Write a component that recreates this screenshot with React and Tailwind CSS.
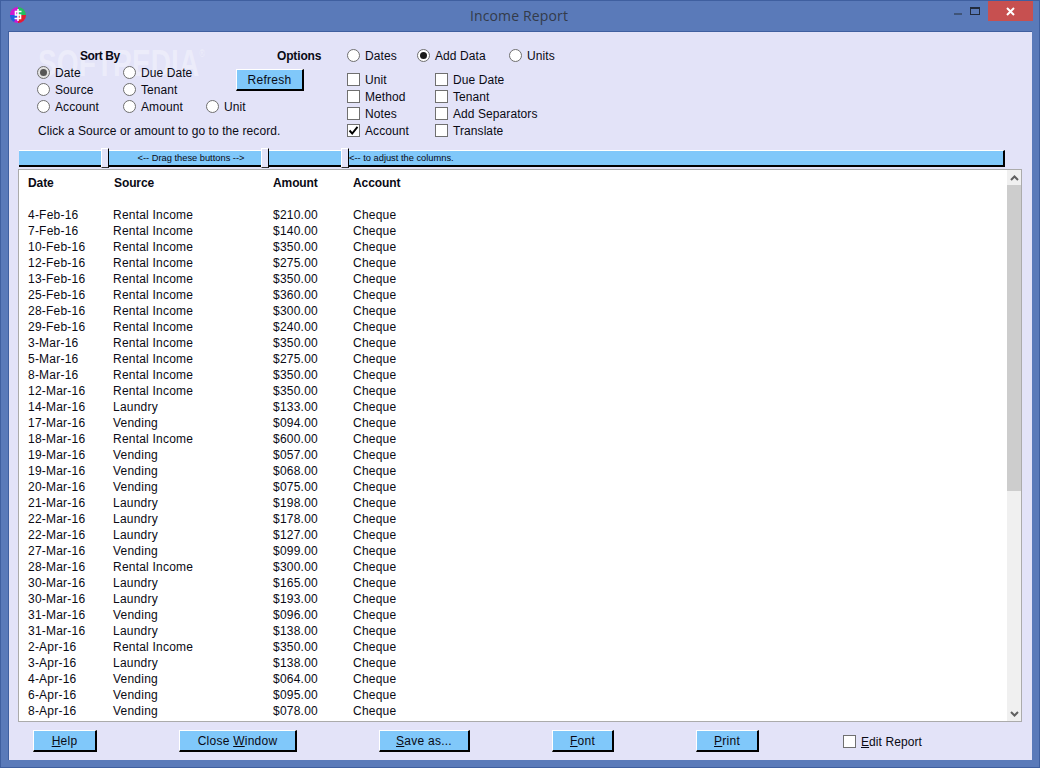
const rows = [
["4-Feb-16","Rental Income","$210.00"],["7-Feb-16","Rental Income","$140.00"],["10-Feb-16","Rental Income","$350.00"],["12-Feb-16","Rental Income","$275.00"],["13-Feb-16","Rental Income","$350.00"],["25-Feb-16","Rental Income","$360.00"],["28-Feb-16","Rental Income","$300.00"],["29-Feb-16","Rental Income","$240.00"],["3-Mar-16","Rental Income","$350.00"],["5-Mar-16","Rental Income","$275.00"],["8-Mar-16","Rental Income","$350.00"],["12-Mar-16","Rental Income","$350.00"],["14-Mar-16","Laundry","$133.00"],["17-Mar-16","Vending","$094.00"],["18-Mar-16","Rental Income","$600.00"],["19-Mar-16","Vending","$057.00"],["19-Mar-16","Vending","$068.00"],["20-Mar-16","Vending","$075.00"],["21-Mar-16","Laundry","$198.00"],["22-Mar-16","Laundry","$178.00"],["22-Mar-16","Laundry","$127.00"],["27-Mar-16","Vending","$099.00"],["28-Mar-16","Rental Income","$300.00"],["30-Mar-16","Laundry","$165.00"],["30-Mar-16","Laundry","$193.00"],["31-Mar-16","Vending","$096.00"],["31-Mar-16","Laundry","$138.00"],["2-Apr-16","Rental Income","$350.00"],["3-Apr-16","Laundry","$138.00"],["4-Apr-16","Vending","$064.00"],["6-Apr-16","Vending","$095.00"],["8-Apr-16","Vending","$078.00"],
];

function Radio({ label, checked, focus, className = "" }) {
  return (
    <div className={"flex h-[17px] items-center gap-[5px] " + className}>
      <span className={"flex h-[13px] w-[13px] shrink-0 items-center justify-center rounded-full border border-[#6f6f6f] " + (focus ? "bg-[#e2e2e2]" : "bg-white")}>
        {checked && <span className={"h-[7px] w-[7px] rounded-full " + (focus ? "bg-[#555555]" : "bg-[#1a1a1a]")} />}
      </span>
      <span className="whitespace-nowrap">{label}</span>
    </div>
  );
}

function Check({ label, checked, className = "" }) {
  return (
    <div className={"flex h-[17px] items-center gap-[5px] " + className}>
      <span className="flex h-[13px] w-[13px] shrink-0 items-center justify-center border border-[#707070] bg-white">
        {checked && (
          <svg width="11" height="11" viewBox="0 0 11 11">
            <path d="M1.5 5.5 L4.2 8.5 L9.5 1.8" fill="none" stroke="#000" strokeWidth="1.9" />
          </svg>
        )}
      </span>
      <span className="whitespace-nowrap">{label}</span>
    </div>
  );
}

function Btn({ children, className = "" }) {
  return (
    <div className={"flex h-[22px] items-center justify-center border-t border-l border-t-white border-l-white border-r-2 border-b-2 border-r-black border-b-black bg-[#80c8fa] tracking-[0.25px] " + className}>
      {children}
    </div>
  );
}

function Handle() {
  return <div className="h-[20px] w-[8px] shrink-0 border border-[#333333] border-t-white border-l-white border-r-black bg-[#e3e3f8]" />;
}

function Seg({ children, className = "" }) {
  return (
    <div className={"flex h-[17px] items-center overflow-hidden border-t border-t-white border-b-2 border-b-black bg-[#80c8fa] text-[9.3px] tracking-normal " + className}>
      {children}
    </div>
  );
}

export default function App() {
  return (
    <div className="flex h-[768px] w-[1040px] flex-col overflow-hidden border border-[#3f5f9f] bg-[#5a7ab9] font-['Liberation_Sans',Arial,sans-serif] text-[12px] leading-[16px] tracking-[0.08px] text-[#0a0a14]">
      <div className="-mx-px -mt-px flex h-[31px] shrink-0 items-start">
        <svg className="ml-[10px] mt-[7px] shrink-0" width="16" height="16" viewBox="0 0 16 16">
          <circle cx="8" cy="8" r="8" fill="#d018d0" />
          <path d="M8 8 L8 0 A8 8 0 0 1 16 8 Z" fill="#20c060" />
          <path d="M8 8 L16 8 A8 8 0 0 1 8 16 Z" fill="#e02030" />
          <path d="M8 8 L4 15 A8 8 0 0 1 0 8 Z" fill="#2060e0" />
          <path d="M11.5 4.5 H5.5 V8 H10.5 V11.5 H4.5 M8 2 V14" stroke="#fff" strokeWidth="1.6" fill="none" />
        </svg>
        <div className="flex-1 pl-[58px] pt-[6px] text-center font-['Open_Sans',sans-serif] text-[14px] leading-[20px] tracking-[0.15px] text-[#333b4a]">Income Report</div>
        <div className="mr-[8px] mt-[13px] h-[2px] w-[8px] bg-[#3f5478]" />
        <div className="mr-[8px] mt-[7px] h-[8px] w-[10px] border border-t-2 border-[#222b3c]" />
        <div className="mr-[7px] mt-px flex h-[20px] w-[45px] items-center justify-center bg-[#c75050]">
          <svg width="9" height="9" viewBox="0 0 9 9">
            <path d="M1 1 L8 8 M8 1 L1 8" stroke="#fff" strokeWidth="2" />
          </svg>
        </div>
      </div>

      <div className="relative ml-[7px] mr-[7px] flex h-[729px] w-[1024px] shrink-0 flex-col border-t border-l border-[#3f5f9f] bg-[#e3e3f8]">
        <div className="pointer-events-none absolute left-[29px] top-[14px] flex origin-left scale-x-[0.78] items-start text-[36px] font-bold leading-[36px] text-white/35">
          SOFTPEDIA<span className="text-[10px] font-normal leading-[16px]">®</span>
        </div>

        <div className="relative flex h-[116px] shrink-0 pl-[28px] pt-[16px]">
          <div className="grid w-[310px] shrink-0 grid-cols-[86px_83px_113px] grid-rows-[16px_17px_17px_17px] content-start">
            <div className="col-span-2 pl-[43px] font-bold tracking-[-0.4px]">Sort By</div>
            <div className="pl-[71px] font-bold tracking-[-0.15px]">Options</div>
            <Radio label="Date" checked focus />
            <Radio label="Due Date" />
            <div className="row-span-2">
              <Btn className="ml-[30px] mt-[5px] w-[68px]">Refresh</Btn>
            </div>
            <Radio label="Source" />
            <Radio label="Tenant" />
            <Radio label="Account" />
            <Radio label="Amount" />
            <Radio label="Unit" />
            <div className="col-span-3 mt-[8px] pl-px">Click a Source or amount to go to the record.</div>
          </div>
          <div className="-mt-px flex flex-col">
            <div className="flex">
              <Radio label="Dates" className="w-[70px]" />
              <Radio label="Add Data" checked className="w-[92px]" />
              <Radio label="Units" />
            </div>
            <div className="mt-[7px] grid grid-cols-[88px_auto]">
              <Check label="Unit" />
              <Check label="Due Date" />
              <Check label="Method" />
              <Check label="Tenant" />
              <Check label="Notes" />
              <Check label="Add Separators" />
              <Check label="Account" checked />
              <Check label="Translate" />
            </div>
          </div>
        </div>

        <div className="ml-[10px] flex h-[20px] w-[986px] shrink-0 items-center">
          <Seg className="w-[82px]" />
          <Handle />
          <Seg className="w-[152px] justify-center pl-[12px]">{"<-- Drag these buttons -->"}</Seg>
          <Handle />
          <Seg className="w-[72px]" />
          <Handle />
          <Seg className="flex-1 border-r-2 border-r-black">{"<-- to adjust the columns."}</Seg>
        </div>

        <div className="ml-[9px] mt-px flex h-[553px] w-[1004px] shrink-0 border border-[#ababab] bg-white">
          <div className="flex-1 overflow-hidden pl-[9px] pt-[5px]">
            <div className="grid h-[32px] grid-cols-[85px_160px_80px_auto] content-start font-bold tracking-[-0.1px]">
              <div>Date</div>
              <div className="pl-px">Source</div>
              <div>Amount</div>
              <div>Account</div>
            </div>
            {rows.map((r, i) => (
              <div key={i} className="grid h-[16px] grid-cols-[85px_160px_80px_auto] tracking-[0.22px]">
                <div>{r[0]}</div>
                <div>{r[1]}</div>
                <div>{r[2]}</div>
                <div>Cheque</div>
              </div>
            ))}
          </div>
          <div className="flex w-[14px] shrink-0 flex-col bg-[#f0f0f0]">
            <div className="flex h-[15px] shrink-0 items-center justify-center">
              <svg width="9" height="6" viewBox="0 0 9 6"><path d="M1 5 L4.5 1.5 L8 5" fill="none" stroke="#606060" strokeWidth="2" /></svg>
            </div>
            <div className="h-[306px] shrink-0 bg-[#cdcdcd]" />
            <div className="flex-1" />
            <div className="flex h-[15px] shrink-0 items-center justify-center">
              <svg width="9" height="6" viewBox="0 0 9 6"><path d="M1 1 L4.5 4.5 L8 1" fill="none" stroke="#606060" strokeWidth="2" /></svg>
            </div>
          </div>
        </div>

        <div className="flex flex-1 items-start gap-[82px] pl-[24px] pt-[8px]">
          <Btn className="w-[64px]"><span><u>H</u>elp</span></Btn>
          <Btn className="w-[118px]"><span>Close <u>W</u>indow</span></Btn>
          <Btn className="w-[91px]"><span><u>S</u>ave as...</span></Btn>
          <Btn className="w-[62px]"><span><u>F</u>ont</span></Btn>
          <Btn className="w-[63px]"><span><u>P</u>rint</span></Btn>
          <Check className="ml-[2px] mt-[3px]" label={<span><u>E</u>dit Report</span>} />
        </div>
      </div>
    </div>
  );
}
